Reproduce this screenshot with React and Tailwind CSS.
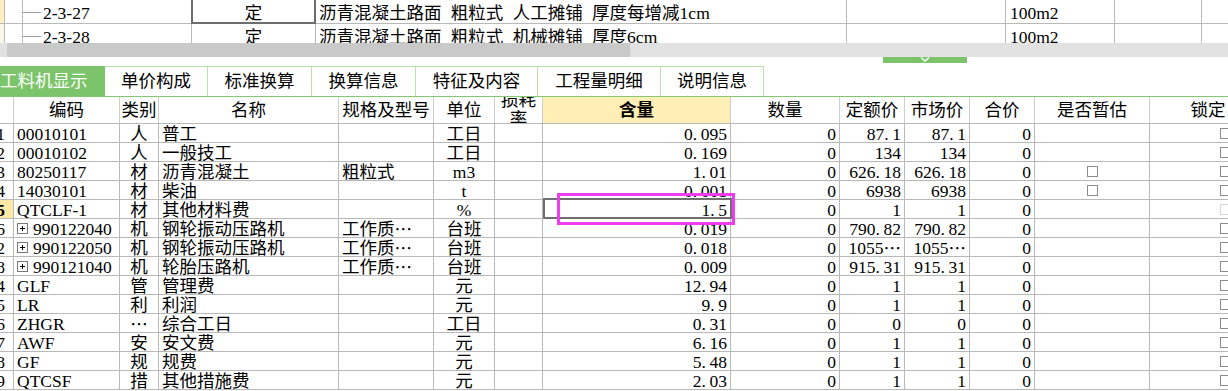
import React from 'react';

const LINE = 'border-[#b9b9b9]';
const FONT = "font-[family-name:'Liberation_Serif','Noto_Sans_CJK_SC',serif]";

// widths of the lower grid (row no., code, kind, name, spec, unit, loss, content, qty, quota, market, total, est, lock)
const W = [
  'w-[14px]', 'w-[106px]', 'w-[39px]', 'w-[180px]', 'w-[95px]', 'w-[61px]', 'w-[48px]',
  'w-[188px]', 'w-[109px]', 'w-[65px]', 'w-[65px]', 'w-[65px]', 'w-[115px]', 'w-[117px]',
];

const TOP_W = ['w-[5px]', 'w-[18px]', 'w-[169px]', 'w-[124px]', 'w-[531px]', 'w-[159px]', 'w-[109px]', 'w-[87px]', 'w-[60px]'];

const TABS = [
  { label: '工料机显示', w: 'w-[105px]', active: true },
  { label: '单价构成', w: 'w-[103px]' },
  { label: '标准换算', w: 'w-[104px]' },
  { label: '换算信息', w: 'w-[104px]' },
  { label: '特征及内容', w: 'w-[122px]' },
  { label: '工程量明细', w: 'w-[123px]' },
  { label: '说明信息', w: 'w-[103px]' },
];

const ROWS = [
  { n: '1', code: '00010101', kind: '人', name: '普工', unit: '工日', qty: '0.095', quota: '87.1', market: '87.1' },
  { n: '2', code: '00010102', kind: '人', name: '一般技工', unit: '工日', qty: '0.169', quota: '134', market: '134' },
  { n: '3', code: '80250117', kind: '材', name: '沥青混凝土', spec: '粗粒式', unit: 'm3', qty: '1.01', quota: '626.18', market: '626.18', est: true },
  { n: '4', code: '14030101', kind: '材', name: '柴油', unit: 't', qty: '0.001', quota: '6938', market: '6938', est: true },
  { n: '5', code: 'QTCLF-1', kind: '材', name: '其他材料费', unit: '%', qty: '1.5', quota: '1', market: '1', current: true },
  { n: '6', code: '990122040', tree: true, kind: '机', name: '钢轮振动压路机', spec: '工作质…', unit: '台班', qty: '0.019', quota: '790.82', market: '790.82' },
  { n: '2', code: '990122050', tree: true, kind: '机', name: '钢轮振动压路机', spec: '工作质…', unit: '台班', qty: '0.018', quota: '1055…', market: '1055…' },
  { n: '8', code: '990121040', tree: true, kind: '机', name: '轮胎压路机', spec: '工作质…', unit: '台班', qty: '0.009', quota: '915.31', market: '915.31' },
  { n: '4', code: 'GLF', kind: '管', name: '管理费', unit: '元', qty: '12.94', quota: '1', market: '1' },
  { n: '5', code: 'LR', kind: '利', name: '利润', unit: '元', qty: '9.9', quota: '1', market: '1' },
  { n: '6', code: 'ZHGR', kind: '…', name: '综合工日', unit: '工日', qty: '0.31', quota: '0', market: '0' },
  { n: '7', code: 'AWF', kind: '安', name: '安文费', unit: '元', qty: '6.16', quota: '1', market: '1' },
  { n: '8', code: 'GF', kind: '规', name: '规费', unit: '元', qty: '5.48', quota: '1', market: '1' },
  { n: '9', code: 'QTCSF', kind: '措', name: '其他措施费', unit: '元', qty: '2.03', quota: '1', market: '1' },
];

// half-width dot and full-width centred ellipsis, like the grid's bitmap font
function Txt({ text }) {
  const parts = [];
  [...text].forEach((ch, k) => {
    if (ch === '.') parts.push(<span key={k} className="inline-block w-[8px]">.</span>);
    else if (ch === '…') parts.push(<span key={k} className="font-[family-name:'Noto_Sans_CJK_SC',sans-serif]">…</span>);
    else if (typeof parts[parts.length - 1] === 'string') parts[parts.length - 1] += ch;
    else parts.push(ch);
  });
  return <>{parts}</>;
}

function Box({ faint }) {
  return <span className={`block w-[11px] h-[11px] border bg-white ${faint ? 'border-[#d6d6d6]' : 'border-[#8c8c8c]'}`} />;
}

function TreePlus() {
  return (
    <svg width="11" height="11" viewBox="0 0 11 11" className="shrink-0 mr-[5px]">
      <rect x="0.5" y="0.5" width="10" height="10" fill="#fff" stroke="#7a7a7a" />
      <path d="M3 5.5h5M5.5 3v5" stroke="#000" strokeWidth="1" />
    </svg>
  );
}

function Cell({ i, className = '', children }) {
  return (
    <div className={`${W[i]} shrink-0 h-full border-r ${LINE} flex items-center overflow-hidden whitespace-nowrap pt-[1px] ${className}`}>
      {children}
    </div>
  );
}

function TopRow({ code, current }) {
  return (
    <div className={`flex h-[24px] border-b ${LINE} leading-[22px]`}>
      <div className={`${TOP_W[0]} shrink-0 ${current ? 'bg-[#fff0c2]' : 'bg-[#fbf7ea]'} border-r ${LINE}`} />
      <div className={`${TOP_W[1]} shrink-0 border-r ${LINE}`} />
      <div className={`${TOP_W[2]} shrink-0 border-r ${LINE} flex items-center pt-[2px]`}>
        <span className="w-[18px] h-px bg-[#a0a0a0] mr-[2px]" />
        {code}
      </div>
      <div className={`${TOP_W[3]} shrink-0 border-r ${LINE} relative flex items-center justify-center pt-[2px]`}>
        定
        {current && <div className="absolute left-[-1px] top-[-2px] right-[-1px] bottom-[-1px] border-2 border-[#6d6d6d]" />}
      </div>
      <div className={`${TOP_W[4]} shrink-0 border-r ${LINE} flex items-center pl-[3px] pt-[2px] whitespace-nowrap overflow-hidden [word-spacing:5px]`}>
        {current ? '沥青混凝土路面 粗粒式 人工摊铺 厚度每增减1cm' : '沥青混凝土路面 粗粒式 机械摊铺 厚度6cm'}
      </div>
      <div className={`${TOP_W[5]} shrink-0 border-r ${LINE}`} />
      <div className={`${TOP_W[6]} shrink-0 border-r ${LINE} flex items-center pl-[4px] pt-[2px]`}>100m2</div>
      <div className={`${TOP_W[7]} shrink-0 border-r ${LINE}`} />
      <div className={`${TOP_W[8]} shrink-0`} />
    </div>
  );
}

function HeaderRow() {
  const labels = ['', '编码', '类别', '名称', '规格及型号', '单位', '', '含量', '数量', '定额价', '市场价', '合价', '是否暂估', '锁定'];
  return (
    <div className={`flex h-[27px] border-b ${LINE}`}>
      {labels.map((l, i) => {
        if (i === 6) {
          return (
            <div key={i} className={`${W[i]} shrink-0 h-full border-r border-[#cfcfcf] flex items-center justify-center overflow-hidden`}>
              <div className="text-center leading-[19px] whitespace-normal">损耗<br />率</div>
            </div>
          );
        }
        return (
          <div
            key={i}
            className={`${W[i]} shrink-0 h-full border-r border-[#cfcfcf] flex items-center justify-center overflow-hidden whitespace-nowrap ${
              i === 7 ? 'bg-[#ffeeb5] font-bold' : ''
            }`}
          >
            {l}
          </div>
        );
      })}
    </div>
  );
}

function BodyRow({ r }) {
  return (
    <div className={`flex h-[19px] border-b ${LINE} leading-[18px]`}>
      <Cell i={0} className={`justify-end pr-[8px] ${r.current ? 'bg-[#ffe9a6] font-bold' : ''}`}>{r.n}</Cell>
      <Cell i={1} className="pl-[3px]">
        {r.tree && <TreePlus />}
        {r.code}
      </Cell>
      <Cell i={2} className="justify-center"><Txt text={r.kind} /></Cell>
      <Cell i={3} className="pl-[3px]">{r.name}</Cell>
      <Cell i={4} className="pl-[3px]">{r.spec && <Txt text={r.spec} />}</Cell>
      <Cell i={5} className="justify-center">{r.unit}</Cell>
      <Cell i={6} />
      <div className={`${W[7]} shrink-0 h-full border-r ${LINE} relative flex items-center justify-end pr-[3px] pt-[1px] whitespace-nowrap`}>
        <Txt text={r.qty} />
        {r.current && (
          <>
            <div className="absolute left-0 top-[-2px] w-[189px] h-[21px] border-2 border-[#6f6f6f] z-10" />
            <div className="absolute left-[14px] top-[-7px] w-[178px] h-[32px] border-[3px] border-[#f03cf0] z-20" />
          </>
        )}
      </div>
      <Cell i={8} className="justify-end pr-[3px]">0</Cell>
      <Cell i={9} className="justify-end pr-[3px]"><Txt text={r.quota} /></Cell>
      <Cell i={10} className="justify-end pr-[3px]"><Txt text={r.market} /></Cell>
      <Cell i={11} className="justify-end pr-[3px]">0</Cell>
      <Cell i={12} className="justify-center">{r.est && <Box />}</Cell>
      <Cell i={13} className="pl-[70px]"><Box faint={r.current} /></Cell>
    </div>
  );
}

export default function App() {
  return (
    <div className={`w-[1228px] h-[391px] overflow-hidden bg-white text-black text-[17.5px] ${FONT}`}>
      {/* upper list, cut by the scrollbar */}
      <div className="h-[43px] overflow-hidden">
        <TopRow code="2-3-27" current />
        <TopRow code="2-3-28" />
      </div>

      {/* horizontal scrollbar */}
      <div className="h-[14px] bg-[#e1e1e1] flex items-center">
        <div className="ml-[7px] w-[623px] h-[14px] bg-[#c9c9c9]" />
      </div>

      {/* splitter */}
      <div className="h-[9px] flex">
        <div className="ml-[883px] w-[84px] h-[6px] bg-[#7cc46a] flex justify-center">
          <svg width="10" height="5" viewBox="0 0 10 5">
            <path d="M1 0.5l4 3.5 4-3.5" fill="none" stroke="#fff" strokeWidth="1.4" />
          </svg>
        </div>
      </div>

      {/* tabs */}
      <div className="h-[31px] flex border-b border-[#86c872]">
        {TABS.map(t => (
          <div
            key={t.label}
            className={`${t.w} shrink-0 flex items-center whitespace-nowrap ${
              t.active ? 'bg-[#7cc46a] text-white justify-start' : 'justify-center bg-white border-t border-r border-[#b8e2aa]'
            }`}
          >
            {t.label}
          </div>
        ))}
      </div>

      <HeaderRow />
      {ROWS.map((r, i) => <BodyRow key={i} r={r} />)}
    </div>
  );
}
